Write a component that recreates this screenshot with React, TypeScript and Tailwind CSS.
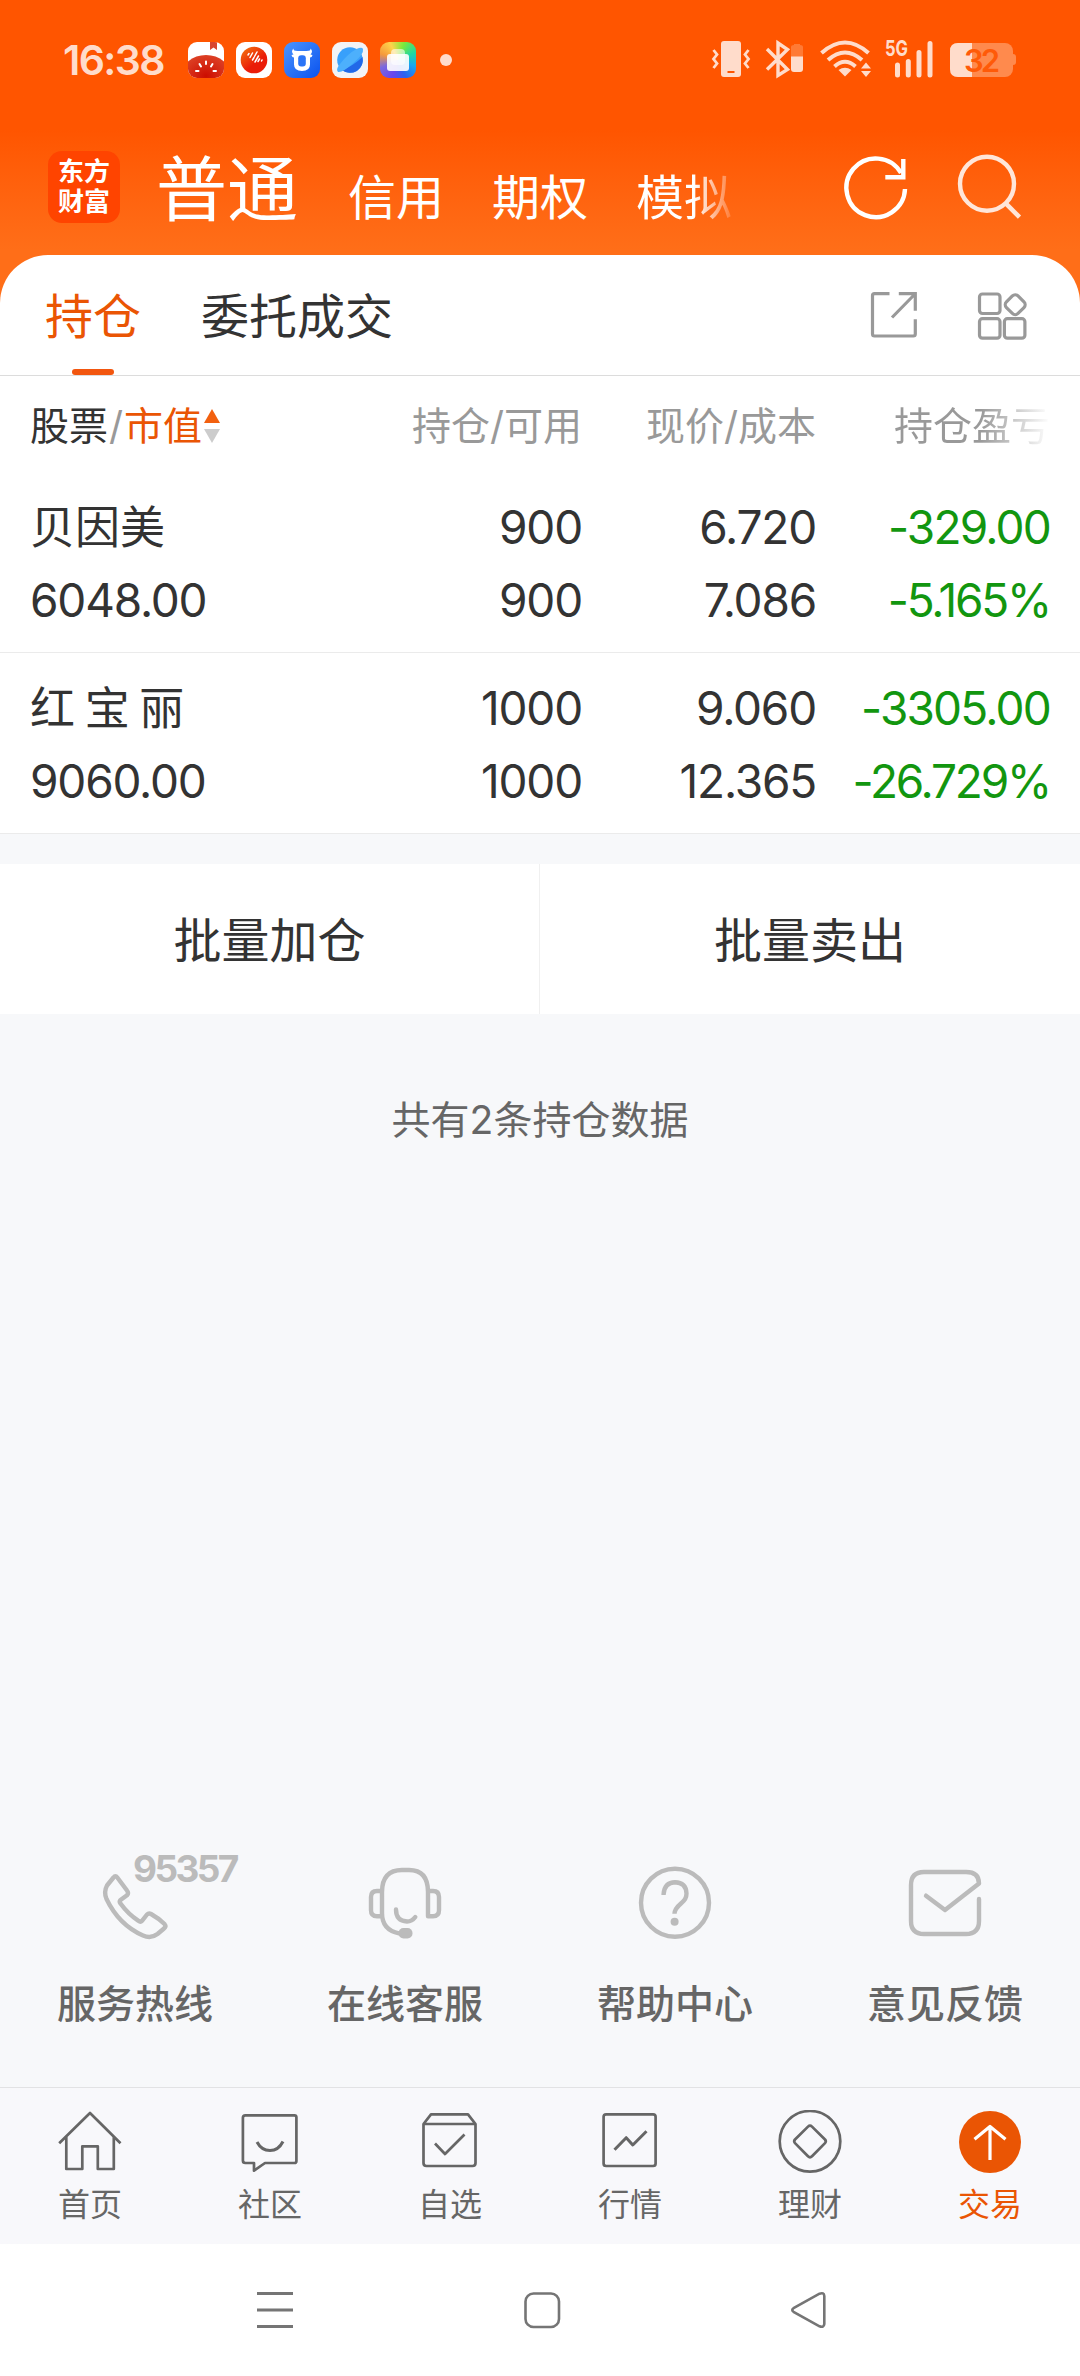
import type { ReactNode } from 'react'

const holdings = [
  {
    name: '贝因美',
    value: '6048.00',
    amount: '900',
    available: '900',
    price: '6.720',
    cost: '7.086',
    profit: '-329.00',
    rate: '-5.165%',
  },
  {
    name: '红 宝 丽',
    value: '9060.00',
    amount: '1000',
    available: '1000',
    price: '9.060',
    cost: '12.365',
    profit: '-3305.00',
    rate: '-26.729%',
  },
]

function StatusBar() {
  return (
    <div className="flex h-[120px] items-center pl-[63px] pr-16">
      <span className="w-[125px] text-[41px] leading-none font-semibold tracking-[-1.6px] text-[#ffdccb]">
        16:38
      </span>
      {/* Notification icons */}
      <div className="flex gap-3">
        <svg width="36" height="36" viewBox="0 0 36 36">
          <defs>
            <clipPath id="melon">
              <rect width="36" height="36" rx="9" />
            </clipPath>
            <radialGradient id="melonFill" cx="0.5" cy="0.5" r="0.6">
              <stop offset="0" stopColor="#cc0d00" />
              <stop offset="1" stopColor="#e04a2c" />
            </radialGradient>
          </defs>
          <g clipPath="url(#melon)">
            <rect width="36" height="36" fill="#fff" />
            <path d="M22 0h7v8l-3.500-2.500L22 8z" fill="#d8452f" />
            <ellipse cx="18" cy="34" rx="25" ry="21" fill="url(#melonFill)" />
            <path
              d="M18 19.500v2.500M11.500 22l1.500 2.500M24.500 22l-1.500 2.500M8 29h2.500M25.500 29h2.500"
              stroke="#fff"
              strokeWidth="2"
              strokeLinecap="round"
            />
          </g>
        </svg>
        <svg width="36" height="36" viewBox="0 0 36 36">
          <defs>
            <linearGradient id="ball" x1="0" y1="0" x2="0.8" y2="1">
              <stop offset="0" stopColor="#f47a10" />
              <stop offset="0.65" stopColor="#ea1c08" />
            </linearGradient>
          </defs>
          <rect width="36" height="36" rx="9" fill="#fff" />
          <circle cx="18" cy="18" r="13.300" fill="url(#ball)" />
          <path
            d="M12 13l1-1.500M14 15.500l2.500-4.500M16.500 18l1.500-2.500M18.500 14.500l2.500-4.500M19 20l3.500-6M22 19.500l1.500-2.500M25.500 19l.5-1"
            stroke="#fff"
            strokeWidth="1.500"
            strokeLinecap="round"
          />
        </svg>
        <svg width="36" height="36" viewBox="0 0 36 36" fill="none">
          <defs>
            <linearGradient id="bull" x1="0" y1="0" x2="1" y2="1">
              <stop offset="0" stopColor="#4b95ff" />
              <stop offset="1" stopColor="#0a52ee" />
            </linearGradient>
          </defs>
          <rect width="36" height="36" rx="9" fill="url(#bull)" />
          <path
            d="M9.500 6.500q-.5 2.500 4 2.500h9q4.500 0 4-2.500 3 3 0 6l2 .5q-.5 2.500-2.500 2.500v7q0 6.500-8 6.500t-8-6.500v-7q-2 0-2.500-2.500l2-.5q-3-3 0-6z"
            fill="#fff"
          />
          <rect x="14.200" y="13.200" width="7.600" height="11.300" rx="3" fill="#2a74f7" />
        </svg>
        <svg width="36" height="36" viewBox="0 0 36 36">
          <rect width="36" height="36" rx="9" fill="#f3f3f5" />
          <circle cx="18" cy="18" r="12.800" fill="#38a0fb" />
          <path d="M30.500 15A12.800 12.800 0 0 1 10 28Q21 24 30.500 15z" fill="#2268e8" />
          <path
            d="M6 30Q3.500 27.500 8 22Q16 11.500 24.500 7Q30 4.500 31 7Q32 12 22 20.500Q10.500 31 6 30z"
            fill="#4db0fc"
          />
        </svg>
        <div className="relative h-9 w-9 rounded-[9px] bg-[conic-gradient(from_20deg,#7be93c,#20d8a0,#18a8f0,#2c62f0,#6a45ec,#7a68e0,#f59a3c,#ffd34a,#7be93c)]">
          <div className="absolute top-[7px] left-[11px] h-4 w-[14px] rounded-[4px] bg-white/60" />
          <div className="absolute top-3 left-[7px] h-[17px] w-[22px] rounded-[3px] bg-white/90" />
        </div>
      </div>
      <div className="ml-6 h-3 w-3 rounded-full bg-[#ffdccb]" />

      <svg
        className="ml-auto"
        width="306"
        height="60"
        viewBox="710 30 306 60"
        fill="none"
        stroke="#ffdccb"
      >
        {/* Vibrate */}
        <rect x="721" y="41" width="20" height="36" rx="3" fill="#ffdccb" stroke="none" />
        <path d="M727.500 72h7" stroke="#ff5500" strokeWidth="2" />
        <path
          d="M713.500 50l3.500 4.500-3.500 4.500 3.500 4.500-3.500 4.500M748.500 50l-3.500 4.500 3.500 4.500-3.500 4.500 3.500 4.500"
          strokeWidth="2.800"
        />
        {/* Bluetooth */}
        <path d="M767 49l20.500 20.500-9.500 6V43l9.500 6.500L767 69.500" strokeWidth="3.400" />
        <path d="M791 47q0-2 3-2v-1h6v1q3 0 3 2v10h-12z" fill="#ff7a35" stroke="none" />
        <path d="M791 56.500h12V69q0 3-3 3h-6q-3 0-3-3z" fill="#ffdccb" stroke="none" />
        {/* Wifi */}
        <path
          d="M821.500 53q23.500-21 47 0M828 60q17-15 34 0M834.500 66.500q10.500-9.500 21 0"
          strokeWidth="4"
        />
        <path d="M838.500 70q6.500-4.500 13 0l-6.500 6.500z" fill="#ffdccb" stroke="none" />
        <path d="M861 68.500l5-6 5 6zM861 71h10l-5 6z" fill="#ffdccb" stroke="none" />
        {/* Signal */}
        <text
          x="885"
          y="56"
          textLength="23"
          lengthAdjust="spacingAndGlyphs"
          fontSize="22"
          fontWeight="700"
          fill="#ffdccb"
          stroke="none"
        >
          5G
        </text>
        <path
          d="M897.500 65v10M908.300 61.500v13.500M919 52.500v22.500M930 43.500v31.500"
          strokeWidth="5"
          strokeLinecap="round"
        />
        {/* Battery */}
        <rect x="950" y="43" width="63" height="34" rx="8" fill="#ff8a4d" stroke="none" />
        <path d="M1013 54q3 0 3 3v5q0 3-3 3z" fill="#ff8a4d" stroke="none" />
        <path d="M972 43h-14q-8 0-8 8v18q0 8 8 8h14z" fill="#ffdccb" stroke="none" />
        <text
          x="964"
          y="72"
          textLength="36"
          fontSize="31"
          fontWeight="600"
          fill="#ff5a08"
          stroke="none"
        >
          32
        </text>
      </svg>
    </div>
  )
}

function Header() {
  return (
    <div className="flex h-[135px] pl-12 text-white">
      <div className="mt-[31px] flex h-[72px] w-[72px] flex-col items-center justify-center rounded-[14px] bg-[#ff4400] text-[26px] leading-[30px] font-bold">
        <span>东方</span>
        <span>财富</span>
      </div>
      <div className="mt-0.5 ml-9 flex items-baseline gap-12 text-5xl leading-[135px] whitespace-nowrap">
        <span className="text-[71px]">普通</span>
        <span className="ml-0.5">信用</span>
        <span>期权</span>
        <span className="bg-linear-to-r from-white from-60% to-[#ff7a2c] bg-clip-text text-transparent">
          模拟
        </span>
      </div>
      <svg className="mt-[30px] ml-auto" width="70" height="74" viewBox="840 150 70 74" fill="none" stroke="#fff" strokeWidth="4.400">
        <path d="M905 189A29.300 29.300 0 1 1 901 173" />
        <path d="M903.300 159v18.300h-18" />
      </svg>
      <svg className="mt-[30px] mr-[54px] ml-[42px]" width="74" height="74" viewBox="952 150 74 74" fill="none" stroke="#ffe6d9" strokeWidth="4.400">
        <circle cx="987" cy="183.700" r="27" />
        <path d="M1005 202.700l14.500 14.500" strokeWidth="4.500" />
      </svg>
    </div>
  )
}

function Tabs() {
  return (
    <div className="relative flex h-[121px] items-center border-b border-[#dcdcdc] pr-[50px] pl-[45px] text-5xl leading-none text-[#333]">
      <span className="pt-[3px] text-[#ea5504]">持仓</span>
      <span className="ml-[60px] pt-[3px]">委托成交</span>
      <div className="absolute bottom-0 left-[72px] h-1.5 w-[42px] rounded-full bg-[#f2560f]" />
      <svg className="ml-auto" width="52" height="54" viewBox="868 288 52 54" fill="none" stroke="#999" strokeWidth="3.200">
        <path d="M889.500 293.700h-15q-2 0-2 2V334q0 2 2 2h38.800q2 0 2-2v-14.700" />
        <path d="M898.800 293.700h16.500v17M892 317.500l22.500-23" />
      </svg>
      <svg className="ml-[55px]" width="55" height="54" viewBox="975 288 55 54" fill="none" stroke="#999" strokeWidth="3.200">
        <rect x="979.500" y="294" width="20.500" height="19.500" rx="3" />
        <rect x="979.500" y="318.700" width="20.500" height="19.500" rx="3" />
        <rect x="1004.400" y="318.700" width="20.500" height="19.500" rx="3" />
        <rect x="1007" y="296.500" width="16.400" height="16.400" rx="4" transform="rotate(45 1015.200 304.700)" />
      </svg>
    </div>
  )
}

function Holdings() {
  return (
    <div className="text-[#333]">
      <div className="grid h-24 grid-cols-[318px_234px_234px_234px] px-[30px] pt-1 text-right text-[39px] leading-[92px] text-[#999]">
        <div className="flex items-center">
          <span className="text-[#333]">股票</span>
          <span className="ml-px">/</span>
          <span className="ml-px text-[#ea5504]">市值</span>
          <svg className="ml-0.5" width="16" height="34" viewBox="0 0 16 34">
            <path d="M8 0l8 14H0z" fill="#f2600f" />
            <path d="M0 20h16L8 34z" fill="#ccc" />
          </svg>
        </div>
        <span>持仓/可用</span>
        <span>现价/成本</span>
        <span className="ml-auto w-[156px] bg-linear-to-r from-[#999] from-55% to-white bg-clip-text text-left text-transparent">
          持仓盈亏
        </span>
      </div>
      {holdings.map((h) => (
        <div
          key={h.name}
          className="grid h-[181px] grid-cols-[318px_234px_234px_234px] border-b border-[#ebebeb] px-[30px] pt-[19px] text-right text-[46px] leading-[73px] tracking-[-1.2px]"
        >
          <div className="text-left">
            <div className="text-[45px] tracking-normal [word-spacing:-3px] whitespace-nowrap">{h.name}</div>
            <div>{h.value}</div>
          </div>
          <div>
            <div>{h.amount}</div>
            <div>{h.available}</div>
          </div>
          <div>
            <div>{h.price}</div>
            <div>{h.cost}</div>
          </div>
          <div className="text-[#12960f]">
            <div className="tracking-[-1.8px]">{h.profit}</div>
            <div className="tracking-[-2.2px]">{h.rate}</div>
          </div>
        </div>
      ))}
    </div>
  )
}

function ServiceItem({ label, children }: { label: string; children: ReactNode }) {
  return (
    <div className="flex flex-col items-center">
      <svg
        width="80"
        height="80"
        viewBox="0 0 80 80"
        fill="none"
        stroke="#bbb"
        strokeWidth="4.400"
        strokeLinecap="round"
        strokeLinejoin="round"
      >
        {children}
      </svg>
      <span className="mt-[41px] text-[39px] leading-[40px] font-medium text-[#666]">{label}</span>
    </div>
  )
}

function Services() {
  return (
    <div className="mt-auto grid h-[224px] grid-cols-4">
      <div className="relative">
        <ServiceItem label="服务热线">
          <path d="M18.500 14.500Q20.400 12 22.300 14.500L32 27.500Q34 30 32 32.300L25.500 37Q24 38.700 25.500 40.500Q33 51 43.500 57.800Q45.500 59.500 47 57.800L52 51.500Q53.800 49.700 56 51Q64 55.500 69.500 61Q71.500 63.500 69 65.500L62.500 71Q56 76 48 72.500Q24 62 11.500 36Q8.500 29 12 22.500z" />
        </ServiceItem>
        <span className="absolute -top-[14px] left-[133px] text-[37px] leading-[40px] font-bold tracking-[-2.600px] text-[#bbb]">
          95357
        </span>
      </div>
      <ServiceItem label="在线客服">
        <path d="M17 52V29Q17 7 37 7h7q19 0 19 22v24.300h5q6 0 6-6V34q0-6-6-6h-5M17 28h-5q-6 0-6 6v13.300q0 6 6 6h5M17 50q0 17 17 20.300h5" />
        <path d="M31 46.500q0 11.500 11 12 5 0 8.300-4.500" />
        <rect x="33.500" y="65" width="14" height="10.500" rx="5" fill="#bbb" stroke="none" />
      </ServiceItem>
      <ServiceItem label="帮助中心">
        <circle cx="40" cy="39.700" r="34" />
        <path
          d="M28.600 32v-1q1-11.500 11.400-11.700Q51 19.500 51.500 30.500q0 5.500-5 9.500Q39.500 46 39.500 50.700"
          strokeLinecap="butt"
        />
        <circle cx="39.600" cy="58.700" r="4" fill="#bbb" stroke="none" />
      </ServiceItem>
      <ServiceItem label="意见反馈">
        <path d="M74 36v22q0 13-13 13H19Q6 71 6 58V22Q6 9 19 9h42q13 0 13 11.500L40 47 21 32.700" />
      </ServiceItem>
    </div>
  )
}

const navItems = [
  {
    label: '首页',
    icon: (
      <path d="M1.200 33.300L32 3l30.500 30.300M8.300 27v32h16V36.300h15.500V59h16V27" />
    ),
  },
  {
    label: '社区',
    icon: (
      <>
        <path d="M7.400 5.300h49q2 0 2 2V51q0 2-2 2H27l-11 7.700V53H7.400q-2.500 0-2.500-2.500V7.800q0-2.500 2.500-2.500z" />
        <path d="M19 32q4.500 8.500 13 8.500T45 31.500" strokeWidth="3" />
      </>
    ),
  },
  {
    label: '自选',
    icon: (
      <>
        <path d="M5.500 14v39q0 3 3 3h46q3 0 3-3V14L50 4.300H13L5.500 14h52" />
        <path d="M17 33.500L27 44l19.500-19.500" />
      </>
    ),
  },
  {
    label: '行情',
    icon: (
      <>
        <rect x="5.600" y="4.300" width="52" height="51.700" rx="2.500" />
        <path d="M16.500 39.700l11.700-12 6.600 7.300 13.700-13.700" strokeWidth="3" />
      </>
    ),
  },
  {
    label: '理财',
    icon: (
      <>
        <circle cx="32" cy="31.300" r="30.300" />
        <path d="M17 29.500L30 16.600q2-2 4 0L47 29.500q1.600 1.800 0 3.600L34 46.200q-2 2-4 0L17 33.100q-1.600-1.800 0-3.600z" />
      </>
    ),
  },
  {
    label: '交易',
    active: true,
    icon: (
      <>
        <circle cx="32" cy="32" r="31" fill="#ea5504" stroke="none" />
        <path d="M32 50V16.500M16.500 29.300L32 16.500l15.500 12.800" stroke="#fff" strokeWidth="3.200" />
      </>
    ),
  },
]

function TabBar() {
  return (
    <div className="grid h-[157px] grid-cols-6 border-t border-[#e2e2e4] bg-[#f8f8fb]">
      {navItems.map((item) => (
        <div key={item.label} className="flex flex-col items-center pt-[22px]">
          <svg width="64" height="64" viewBox="0 0 64 64" fill="none" stroke="#666" strokeWidth="2.700" strokeLinejoin="round">
            {item.icon}
          </svg>
          <span
            className={`mt-3 text-[32px] leading-[38px] ${item.active ? 'text-[#ea5504]' : 'text-[#666]'}`}
          >
            {item.label}
          </span>
        </div>
      ))}
    </div>
  )
}

function SystemNav() {
  return (
    <div className="flex h-[132px] items-center justify-between bg-white pr-[252px] pl-[256px]">
      <svg width="38" height="38" viewBox="0 0 38 38" stroke="#757575" strokeWidth="2.800">
        <path d="M1 2.500h36M1 19h36M1 35.500h36" />
      </svg>
      <svg width="38" height="38" viewBox="0 0 38 38" fill="none" stroke="#757575" strokeWidth="2.600">
        <rect x="2.500" y="2.500" width="33.500" height="33.500" rx="8" />
      </svg>
      <svg width="38" height="38" viewBox="0 0 38 38" fill="none" stroke="#757575" strokeWidth="2.600">
        <path d="M3.500 17.200L29.500 2.700Q34 1 34.300 5V33q-.5 4-4.800 2.300L3.500 20.800q-2.500-1.800 0-3.600z" />
      </svg>
    </div>
  )
}

export default function App() {
  return (
    <div className="flex h-[2376px] w-[1080px] flex-col overflow-hidden bg-[#f7f8fa] font-['Inter','Noto_Sans_CJK_SC',sans-serif]">
      <div className="h-[303px] shrink-0 bg-linear-to-b from-[#ff5500] from-[130px] to-[#ff6e18] to-[250px]">
        <StatusBar />
        <Header />
      </div>
      <div className="-mt-12 rounded-t-[48px] bg-white">
        <Tabs />
        <Holdings />
      </div>

      {/* Batch actions */}
      <div className="mt-[30px] grid h-[150px] grid-cols-2 bg-white text-center text-5xl leading-[153px] text-[#333]">
        <span className="h-[150px] border-r border-[#f0f0f0]">批量加仓</span>
        <span>批量卖出</span>
      </div>
      <p className="mt-[86px] text-center text-[39px] leading-[40px] text-[#666]">共有2条持仓数据</p>

      <Services />
      <TabBar />
      <SystemNav />
    </div>
  )
}
